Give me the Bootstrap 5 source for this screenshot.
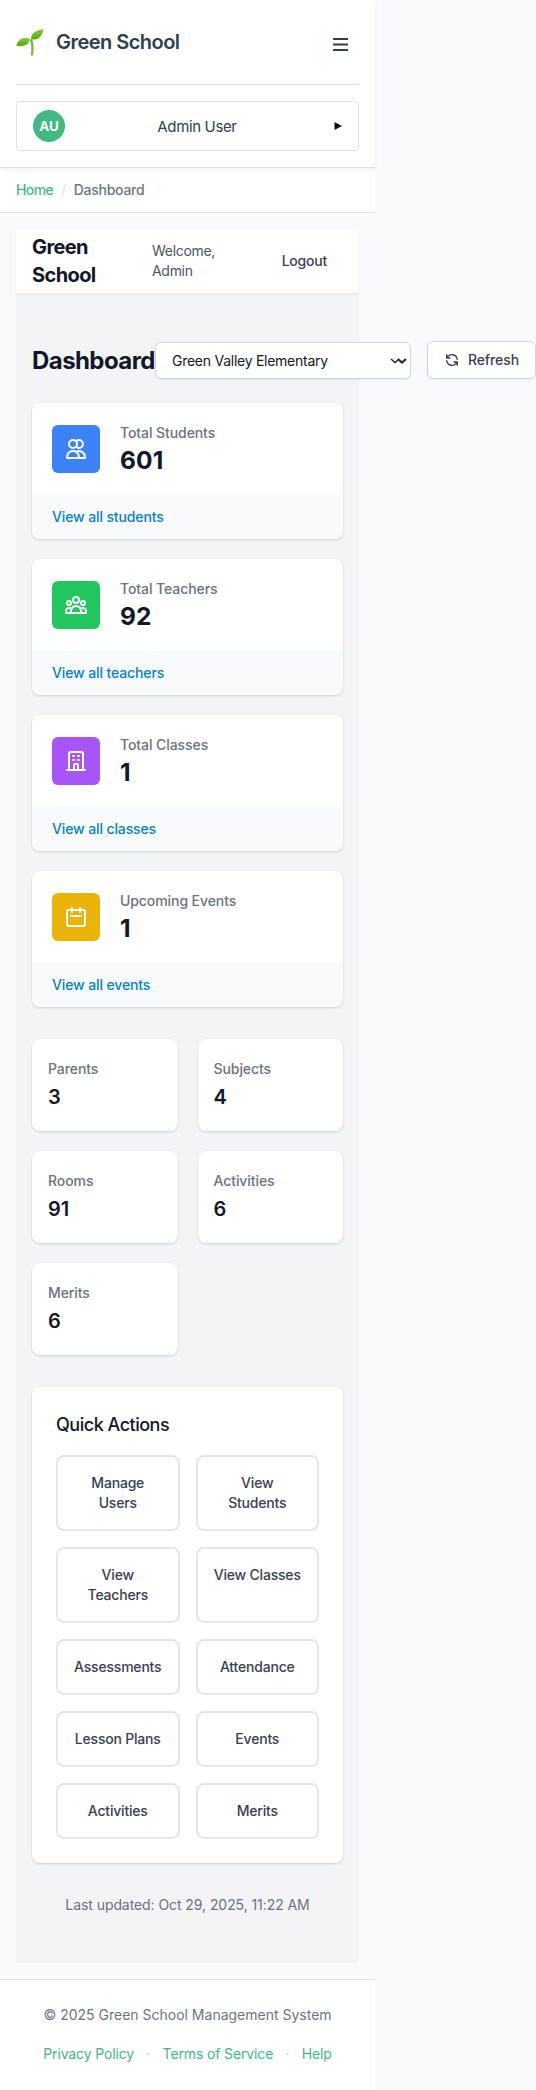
<!DOCTYPE html>
<html lang="en">
<head>
<meta charset="utf-8">
<meta name="viewport" content="width=device-width, initial-scale=1">
<title>Green School – Dashboard</title>
<link href="https://cdn.jsdelivr.net/npm/bootstrap@5.3.0/dist/css/bootstrap.min.css" rel="stylesheet">
<style>
  body { font-family: Inter, "Noto Sans", sans-serif; font-size: 14px; line-height: 20px; background: #f8fafc; color: #111827; overflow-x: hidden; }
  a { text-decoration: none; }
  .page-shell { width: 375px; }
  .site-header { height: 168px; border-bottom: 1px solid #dee2e6; box-shadow: 0 2px 4px rgba(0,0,0,.06); position: relative; }
  .brand-row { height: 85px; margin: 0 16px; border-bottom: 1px solid #dcdee0; }
  .brand-name { font-size: 20px; font-weight: 600; color: #2c3e50; letter-spacing: -.53px; margin-left: 12px; }
  .menu-bars { width: 15px; margin-right: 11px; margin-top: 5px; }
  .user-box { height: 50px; margin: 16px 16px 0; border: 1px solid #dee2e6; border-radius: 4px; padding: 0 16px; color: #2c3e50; font-size: 15px; }
  .user-name { letter-spacing: -.36px; padding: 2px 5px 0 0; }
  .avatar { width: 32px; height: 32px; background: #42b883; font-weight: 700; font-size: 13.3px; }
  .crumbs { height: 45px; border-bottom: 1px solid #dee2e6; padding: 0 16px; }
  .crumb-home { color: #42b883; font-weight: 500; letter-spacing: -.6px; }
  .crumb-sep { color: #dee2e6; padding: 0 7.5px 0 8px; }
  .crumb-here { color: #6c757d; font-weight: 500; letter-spacing: -.26px; }
  .panel { margin: 16px; background: #f3f4f6; height: 1734px; }
  .panel-nav { height: 64px; padding: 0 16px; box-shadow: 0 1px 2px rgba(0,0,0,.07); }
  .panel-brand { font-size: 20px; line-height: 28px; font-weight: 700; letter-spacing: -.6px; width: 120px; }
  .welcome { color: #4b5563; letter-spacing: -.3px; width: 90px; }
  .logout { color: #374151; font-weight: 500; letter-spacing: -.23px; margin-right: 16px; }
  .title-row { padding: 48px 0 0 16px; width: 520px; height: 110px; }
  .page-title { font-size: 24px; line-height: 32px; font-weight: 700; letter-spacing: -.57px; width: 123px; margin: 4px 0 0; white-space: nowrap; }
  .school-select { width: 256px; height: 37px; margin-top: 1px; border: 1px solid #d1d5db; border-radius: 6px; padding: 1px 3px 0 16px; box-shadow: 0 1px 2px rgba(0,0,0,.06); letter-spacing: -.26px; }
  .refresh-btn { width: 109px; height: 38px; margin-left: 16px; border: 1px solid #d1d5db; border-radius: 6px; padding: 0 16px; gap: 8px; color: #374151; font-weight: 500; letter-spacing: -.1px; box-shadow: 0 1px 2px rgba(0,0,0,.05); }
  .tile { background: #fff; border-radius: 8px; box-shadow: 0 1px 3px rgba(0,0,0,.1), 0 1px 2px rgba(0,0,0,.06); overflow: hidden; }
  .stat-top { height: 92px; padding: 0 20px; }
  .stat-icon { width: 48px; height: 48px; border-radius: 6px; margin-right: 20px; }
  .tile-label { color: #6b7280; font-weight: 500; letter-spacing: -.08px; }
  .stat-num { font-size: 24.5px; line-height: 32px; font-weight: 700; padding-top: 1px; margin-bottom: -1px; letter-spacing: .2px; }
  .stat-foot { height: 44px; background: #f9fafb; padding: 12px 20px; }
  .stat-foot a { color: #0284c7; font-weight: 500; letter-spacing: -.12px; }
  .stats { gap: 20px; padding: 0 16px; }
  .minis { display: grid; grid-template-columns: 1fr 1fr; gap: 20px; padding: 0 16px; margin-top: 32px; }
  .mini { height: 92px; padding: 20px 16px; }
  .mini-num { font-size: 20px; line-height: 28px; font-weight: 600; margin-top: 4px; }
  .actions { margin: 32px 16px 0; padding: 24px; height: 476px; }
  .actions h2 { font-size: 18px; line-height: 28px; font-weight: 500; letter-spacing: -.49px; margin: 0 0 16px; }
  .action-grid { display: grid; grid-template-columns: 1fr 1fr; gap: 16px; }
  .action-grid a { border: 2px solid #e5e7eb; border-radius: 8px; padding: 16px; text-align: center; color: #374151; font-weight: 500; letter-spacing: -.2px; }
  .updated { color: #6b7280; letter-spacing: -.074px; margin-top: 32px; }
  .site-footer { height: 111px; border-top: 1px solid #dee2e6; color: #6c757d; padding-top: 25px; }
  .foot-links { margin-top: 19px; letter-spacing: -.13px; color: #ced4da; }
  .foot-links span { padding: 0 12.3px; }
  .foot-links a { color: #42b883; }
</style>
</head>
<body>
<div class="page-shell">
  <header class="site-header bg-white">
    <div class="brand-row d-flex align-items-center">
      <svg width="28" height="28" viewBox="0 0 28 28">
        <defs><linearGradient id="leaf" x1="0" y1="0" x2="0" y2="1"><stop offset="0" stop-color="#8ccb2d"/><stop offset="1" stop-color="#56a30f"/></linearGradient></defs>
        <path d="M15.2 12.5C16.6 16 16.8 21 16 26.6" fill="none" stroke="#79b82a" stroke-width="2.3" stroke-linecap="round"/>
        <path d="M15.8 13C14 9.500 15.500 3 27.200 1.100C26.800 8.500 22 12.500 15.800 11.200Z" fill="url(#leaf)"/>
        <path d="M15.500 12.800C11 7.500 2.500 9.500 .4 17.800C7 19 12.500 17 13.300 12.200Z" fill="url(#leaf)"/>
      </svg>
      <div class="brand-name">Green School</div>
      <svg class="menu-bars ms-auto" height="13" viewBox="0 0 15 13"><path d="M0 1h15M0 6.500h15M0 12h15" stroke="#2c3e50" stroke-width="2"/></svg>
    </div>
    <div class="user-box d-flex align-items-center justify-content-between">
      <div class="avatar rounded-circle text-white d-flex align-items-center justify-content-center">AU</div>
      <span class="user-name">Admin User</span>
      <svg width="8" height="8" viewBox="0 0 8 8"><path d="M.5 0L8 4L.5 8Z" fill="#111"/></svg>
    </div>
  </header>
  <nav class="crumbs bg-white d-flex align-items-center">
    <a href="#" class="crumb-home">Home</a><span class="crumb-sep">/</span><span class="crumb-here">Dashboard</span>
  </nav>

  <main class="panel">
    <div class="panel-nav bg-white d-flex align-items-center">
      <div class="panel-brand">Green<br>School</div>
      <div class="welcome">Welcome,<br>Admin</div>
      <a href="#" class="logout ms-auto">Logout</a>
    </div>
    <div class="title-row d-flex align-items-start">
      <h1 class="page-title">Dashboard</h1>
      <div class="school-select bg-white d-flex align-items-center justify-content-between flex-shrink-0">Green Valley Elementary
        <svg width="17" height="8" viewBox="0 0 17 8" fill="none" stroke="#1f2937"><path d="M1 2l4 3.500L9 2" stroke-width="1.500"/><path d="M8 2l4 3.500L16 2" stroke-width="2.200"/></svg>
      </div>
      <div class="refresh-btn bg-white d-flex align-items-center flex-shrink-0">
        <svg width="16" height="16" viewBox="0 0 24 24" fill="none" stroke="currentColor" stroke-width="2" stroke-linecap="round" stroke-linejoin="round"><path d="M4 4v5h.582m15.356 2A8.001 8.001 0 004.582 9m0 0H9m11 11v-5h-.581m0 0a8.003 8.003 0 01-15.357-2m15.357 2H15"/></svg>Refresh
      </div>
    </div>

    <div class="stats d-flex flex-column">
      <div class="tile">
        <div class="stat-top d-flex align-items-center">
          <div class="stat-icon d-flex align-items-center justify-content-center" style="background:#3b82f6"><svg width="24" height="24" viewBox="0 0 24 24" fill="none" stroke="#fff" stroke-width="2" stroke-linecap="round" stroke-linejoin="round"><path d="M12 4.354a4 4 0 110 5.292M15 21H3v-1a6 6 0 0112 0v1zm0 0h6v-1a6 6 0 00-9-5.197M13 7a4 4 0 11-8 0 4 4 0 018 0z"/></svg></div>
          <div><div class="tile-label">Total Students</div><div class="stat-num">601</div></div>
        </div>
        <div class="stat-foot"><a href="#">View all students</a></div>
      </div>
      <div class="tile">
        <div class="stat-top d-flex align-items-center">
          <div class="stat-icon d-flex align-items-center justify-content-center" style="background:#22c55e"><svg width="24" height="24" viewBox="0 0 24 24" fill="none" stroke="#fff" stroke-width="2" stroke-linecap="round" stroke-linejoin="round"><path d="M17 20h5v-2a3 3 0 00-5.356-1.857M17 20H7m10 0v-2c0-.656-.126-1.283-.356-1.857M7 20H2v-2a3 3 0 015.356-1.857M7 20v-2c0-.656.126-1.283.356-1.857m0 0a5.002 5.002 0 019.288 0M15 7a3 3 0 11-6 0 3 3 0 016 0zm6 3a2 2 0 11-4 0 2 2 0 014 0zM7 10a2 2 0 11-4 0 2 2 0 014 0z"/></svg></div>
          <div><div class="tile-label">Total Teachers</div><div class="stat-num">92</div></div>
        </div>
        <div class="stat-foot"><a href="#">View all teachers</a></div>
      </div>
      <div class="tile">
        <div class="stat-top d-flex align-items-center">
          <div class="stat-icon d-flex align-items-center justify-content-center" style="background:#a855f7"><svg width="24" height="24" viewBox="0 0 24 24" fill="none" stroke="#fff" stroke-width="2" stroke-linecap="round" stroke-linejoin="round"><path d="M19 21V5a2 2 0 00-2-2H7a2 2 0 00-2 2v16m14 0h2m-2 0h-5m-9 0H3m2 0h5M9 7h1m-1 4h1m4-4h1m-1 4h1m-5 10v-5a1 1 0 011-1h2a1 1 0 011 1v5m-4 0h4"/></svg></div>
          <div><div class="tile-label">Total Classes</div><div class="stat-num">1</div></div>
        </div>
        <div class="stat-foot"><a href="#">View all classes</a></div>
      </div>
      <div class="tile">
        <div class="stat-top d-flex align-items-center">
          <div class="stat-icon d-flex align-items-center justify-content-center" style="background:#eab308"><svg width="24" height="24" viewBox="0 0 24 24" fill="none" stroke="#fff" stroke-width="2" stroke-linecap="round" stroke-linejoin="round"><path d="M8 7V3m8 4V3m-9 8h10M5 21h14a2 2 0 002-2V7a2 2 0 00-2-2H5a2 2 0 00-2 2v12a2 2 0 002 2z"/></svg></div>
          <div><div class="tile-label">Upcoming Events</div><div class="stat-num">1</div></div>
        </div>
        <div class="stat-foot"><a href="#">View all events</a></div>
      </div>
    </div>

    <div class="minis">
      <div class="tile mini"><div class="tile-label">Parents</div><div class="mini-num">3</div></div>
      <div class="tile mini"><div class="tile-label">Subjects</div><div class="mini-num">4</div></div>
      <div class="tile mini"><div class="tile-label">Rooms</div><div class="mini-num">91</div></div>
      <div class="tile mini"><div class="tile-label">Activities</div><div class="mini-num">6</div></div>
      <div class="tile mini"><div class="tile-label">Merits</div><div class="mini-num">6</div></div>
    </div>

    <section class="tile actions">
      <h2>Quick Actions</h2>
      <div class="action-grid">
        <a href="#">Manage<br>Users</a><a href="#">View<br>Students</a>
        <a href="#">View<br>Teachers</a><a href="#" class="text-nowrap">View Classes</a>
        <a href="#">Assessments</a><a href="#">Attendance</a>
        <a href="#">Lesson Plans</a><a href="#">Events</a>
        <a href="#">Activities</a><a href="#">Merits</a>
      </div>
    </section>
    <div class="updated text-center">Last updated: Oct 29, 2025, 11:22 AM</div>
  </main>

  <footer class="site-footer bg-white text-center">
    <div>© 2025 Green School Management System</div>
    <div class="foot-links d-flex justify-content-center"><a href="#">Privacy Policy</a><span>·</span><a href="#">Terms of Service</a><span>·</span><a href="#">Help</a></div>
  </footer>
</div>
<script src="https://cdn.jsdelivr.net/npm/bootstrap@5.3.0/dist/js/bootstrap.bundle.min.js"></script>
</body>
</html>
